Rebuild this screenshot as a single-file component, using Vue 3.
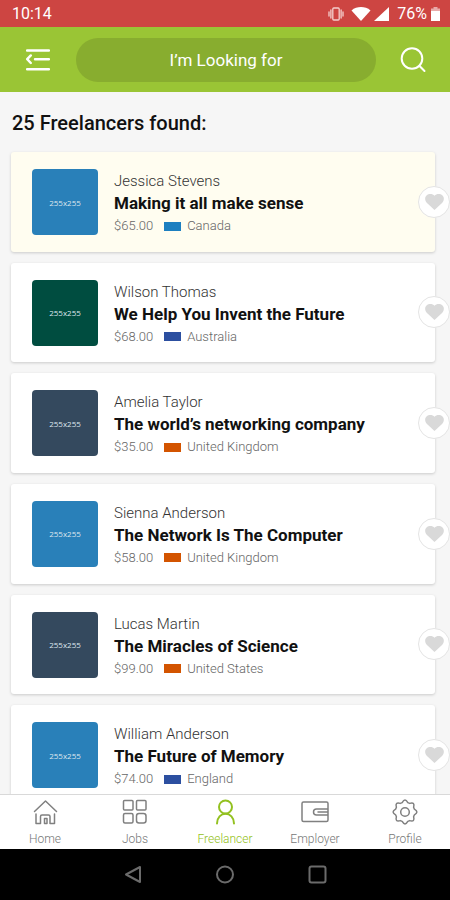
<script setup>
import { ref } from 'vue'

const query = ref('')

const freelancers = ref([
  { name: 'Jessica Stevens', title: 'Making it all make sense', rate: '$65.00', country: 'Canada', avatar: 'blue', flag: 'sky', featured: true, saved: false },
  { name: 'Wilson Thomas', title: 'We Help You Invent the Future', rate: '$68.00', country: 'Australia', avatar: 'green', flag: 'navy', saved: false },
  { name: 'Amelia Taylor', title: 'The world’s networking company', rate: '$35.00', country: 'United Kingdom', avatar: 'slate', flag: 'orange', saved: false },
  { name: 'Sienna Anderson', title: 'The Network Is The Computer', rate: '$58.00', country: 'United Kingdom', avatar: 'blue', flag: 'orange', saved: false },
  { name: 'Lucas Martin', title: 'The Miracles of Science', rate: '$99.00', country: 'United States', avatar: 'slate', flag: 'orange', saved: false },
  { name: 'William Anderson', title: 'The Future of Memory', rate: '$74.00', country: 'England', avatar: 'blue', flag: 'navy', saved: false },
])
</script>

<template>
  <div class="screen">
    <div class="status">
      <span class="clock">10:14</span>
      <svg class="vibrate" viewBox="0 0 16 16" width="16" height="16" aria-hidden="true">
        <rect x="4.8" y="2" width="6.4" height="12" rx="1" />
        <path d="M2.900 4v8M1 6v4M13.100 4v8M15 6v4" />
      </svg>
      <svg class="wifi" viewBox="0 0 20 14" width="20" height="14" aria-hidden="true">
        <path d="M0.500 3.400C6-1 14-1 19.500 3.400L10 14z" />
      </svg>
      <svg class="signal" viewBox="0 0 15 14" width="15" height="14" aria-hidden="true">
        <path d="M15 0v14H0z" />
      </svg>
      <span class="percent">76%</span>
      <svg class="battery" viewBox="0 0 9 14" width="9" height="14" aria-hidden="true">
        <path d="M2.500 0h4v1.500H9V14H0V1.500h2.500z" opacity=".55" />
        <path d="M0 4h9v10H0z" />
      </svg>
    </div>

    <header class="topbar">
      <button class="icon-button" type="button" aria-label="Menu">
        <svg viewBox="0 0 24 24" width="24" height="24" class="menu-icon">
          <path d="M1 2.500h22M9 11.200h14M1 21.200h22" />
          <path d="M4.800 7.400 1.200 11.200l3.600 3.800" />
        </svg>
      </button>
      <input v-model="query" class="search" type="text" placeholder="I’m Looking for" aria-label="Search freelancers" />
      <button class="icon-button" type="button" aria-label="Search">
        <svg viewBox="0 0 26 26" width="26" height="26" class="search-icon">
          <circle cx="12" cy="11.500" r="10.300" />
          <path d="M19.300 18.800l5.200 5.200" />
        </svg>
      </button>
    </header>

    <main class="content">
      <h1 class="heading">25 Freelancers found:</h1>
      <ul class="list">
        <li v-for="person in freelancers" :key="person.name" class="card" :class="{ featured: person.featured }">
          <span class="avatar" :class="person.avatar">255x255</span>
          <div class="details">
            <p class="name">{{ person.name }}</p>
            <h2 class="title">{{ person.title }}</h2>
            <p class="meta">
              <span>{{ person.rate }}</span>
              <i class="flag" :class="person.flag"></i>
              <span>{{ person.country }}</span>
            </p>
          </div>
          <button
            class="save"
            type="button"
            :class="{ saved: person.saved }"
            :aria-pressed="person.saved"
            :aria-label="'Save ' + person.name"
            @click="person.saved = !person.saved"
          >
            <svg viewBox="0 0 20 17" width="19" height="16">
              <path d="M10 17 2 9.500C-.5 7-.5 3.500 1.500 1.600 4-.7 8-.4 10 1.800 12-.4 16-.7 18.500 1.600c2 1.900 2 5.400-.5 7.900z" />
            </svg>
          </button>
        </li>
      </ul>
    </main>

    <nav class="tabs">
      <a class="tab" href="#home">
        <svg viewBox="0 0 26 26" width="26" height="26">
          <path d="M2.500 12.500 13.500 2l11 10.500M4 15V24.500h4.500V17.500q0-1.500 1.500-1.500h6.500q1.500 0 1.500 1.500v7h4.500V15M12.500 24.500V19.500h2.500v5z" />
        </svg>
        <span>Home</span>
      </a>
      <a class="tab" href="#jobs">
        <svg viewBox="0 0 26 26" width="26" height="26">
          <rect x="1.500" y="1.500" width="9.500" height="9.500" rx="1" />
          <rect x="14.500" y="1.500" width="9.500" height="9.500" rx="1" />
          <rect x="1.500" y="14.500" width="9.500" height="9.500" rx="1.500" />
          <rect x="14.500" y="14.500" width="9.500" height="9.500" rx="2.500" />
        </svg>
        <span>Jobs</span>
      </a>
      <a class="tab active" href="#freelancer" aria-current="page">
        <svg viewBox="0 0 26 26" width="26" height="26">
          <circle cx="13.500" cy="8" r="6.500" />
          <path d="M5 24.500c0-6 4-9.800 8.500-9.800s8.500 3.800 8.500 9.800" />
        </svg>
        <span>Freelancer</span>
      </a>
      <a class="tab" href="#employer">
        <svg viewBox="0 0 28 26" width="28" height="26">
          <path d="M27 10V4.500Q27 3 25.500 3h-23Q1 3 1 4.500V21q0 1.500 1.500 1.500h23Q27 22.500 27 21v-5M27 10H15.500a3 3 0 0 0 0 6H27zM17 13h10" />
        </svg>
        <span>Employer</span>
      </a>
      <a class="tab" href="#profile">
        <svg viewBox="0 0 26 26" width="26" height="26">
          <circle cx="13" cy="13" r="4.300" />
          <path d="M10.200 3.600Q13-1.400 15.800 3.600L17.700 4.400Q23.200 2.800 21.600 8.300L22.400 10.200Q27.400 13 22.400 15.800L21.600 17.700Q23.200 23.200 17.700 21.600L15.800 22.400Q13 27.400 10.200 22.400L8.300 21.600Q2.800 23.200 4.400 17.700L3.600 15.800Q-1.400 13 3.600 10.200L4.400 8.300Q2.800 2.800 8.300 4.400Z" />
        </svg>
        <span>Profile</span>
      </a>
    </nav>

    <div class="system">
      <button type="button" aria-label="Back">
        <svg viewBox="0 0 20 20" width="20" height="20"><path d="M17 2v15L3 9.500z" /></svg>
      </button>
      <button type="button" aria-label="Home screen">
        <svg viewBox="0 0 20 20" width="20" height="20"><circle cx="10" cy="9.500" r="8" /></svg>
      </button>
      <button type="button" aria-label="Recent apps">
        <svg viewBox="0 0 20 20" width="20" height="20"><rect x="2.500" y="1.500" width="16" height="16" rx="2" /></svg>
      </button>
    </div>
  </div>
</template>

<style>
body {
  margin: 0;
}
</style>

<style scoped>
.screen {
  display: flex;
  flex-direction: column;
  height: 100vh;
  overflow: hidden;
  background: #f6f6f6;
  color: #111;
  font-family: Roboto, "Liberation Sans", sans-serif;
}

button {
  display: flex;
  align-items: center;
  justify-content: center;
  padding: 0;
  border: 0;
  background: none;
  cursor: pointer;
}

svg {
  display: block;
  fill: none;
  stroke-linecap: round;
  stroke-linejoin: round;
}

.status {
  display: flex;
  flex: none;
  align-items: center;
  height: 27px;
  padding: 0 10px 0 12px;
  background: #cd4542;
  color: #fff;
  font-size: 16px;
}

.clock {
  flex: 1;
}

.vibrate {
  margin-right: 7px;
  stroke: #f4cfce;
  stroke-width: 1.3;
}

.wifi,
.signal,
.battery {
  fill: #fff;
}

.wifi {
  margin-right: 3px;
}

.signal {
  margin-right: 8px;
}

.percent {
  margin-right: 4px;
}

.topbar {
  display: flex;
  flex: none;
  align-items: center;
  height: 65px;
  background: #9ac535;
}

.icon-button {
  flex: none;
  width: 76px;
  height: 48px;
}

.icon-button:last-child {
  width: 74px;
}

.menu-icon {
  stroke: #fff;
  stroke-width: 2.4;
}

.search-icon {
  stroke: #fff;
  stroke-width: 2;
}

.search {
  flex: 1;
  box-sizing: border-box;
  min-width: 0;
  height: 44px;
  padding: 0 20px;
  border: 0;
  border-radius: 22px;
  outline: none;
  background: #88ad2f;
  color: #fff;
  font-family: inherit;
  font-size: 17px;
  text-align: center;
}

.search::placeholder {
  color: #fff;
  opacity: 1;
}

.content {
  display: flex;
  flex: 1;
  flex-direction: column;
  min-height: 0;
  overflow-y: auto;
  scrollbar-width: none;
}

.heading {
  flex: none;
  margin: 0;
  padding: 19px 12px 17px;
  font-size: 20px;
  font-weight: 500;
  line-height: 24px;
}

.list {
  display: grid;
  flex: 1 0 auto;
  grid-auto-rows: minmax(99px, 1fr);
  gap: 11px;
  margin: 0 15px -11px 11px;
  padding: 0;
  list-style: none;
}

.card {
  position: relative;
  display: flex;
  box-sizing: border-box;
  gap: 16px;
  padding: 17px 21px 14px;
  border-radius: 3px;
  background: #fff;
  box-shadow: 0 1px 3px rgba(0, 0, 0, 0.18);
}

.card.featured {
  background: #fffdf0;
}

.avatar {
  display: flex;
  flex: none;
  align-items: center;
  justify-content: center;
  width: 66px;
  height: 66px;
  border-radius: 4px;
  color: #dde6ee;
  font-family: "Open Sans", sans-serif;
  font-size: 8px;
}

.avatar.blue {
  background: #2980b9;
}

.avatar.green {
  background: #004d40;
}

.avatar.slate {
  background: #34495e;
}

.details {
  min-width: 0;
}

.name,
.title,
.meta {
  margin: 0;
  white-space: nowrap;
}

.name {
  margin-top: 2px;
  color: #333;
  font-size: 15px;
  font-weight: 300;
  line-height: 20px;
}

.title {
  color: #111;
  font-size: 17px;
  font-weight: 700;
  line-height: 24px;
}

.meta {
  display: flex;
  align-items: center;
  color: #666;
  font-size: 13px;
  font-weight: 300;
  line-height: 22px;
}

.flag {
  width: 17px;
  height: 9px;
  margin: 0 6px 0 11px;
}

.flag.sky {
  background: #1d7fc0;
}

.flag.navy {
  background: #2c4fa0;
}

.flag.orange {
  background: #d35400;
}

.save {
  position: absolute;
  top: 50%;
  right: -15px;
  width: 32px;
  height: 32px;
  border: 1px solid #e4e4e4;
  border-radius: 50%;
  background: #fff;
  transform: translateY(-50%);
}

.save svg {
  fill: #d9d9d9;
}

.save.saved svg {
  fill: #e0504d;
}

.tabs {
  position: relative;
  display: flex;
  flex: none;
  box-sizing: border-box;
  height: 55px;
  border-top: 1px solid #d9d9d9;
  background: #fff;
}

.tab {
  display: flex;
  flex: 1 0 0;
  flex-direction: column;
  align-items: center;
  gap: 6px;
  padding-top: 4px;
  color: #777;
  font-size: 12px;
  font-weight: 300;
  line-height: 16px;
  text-decoration: none;
}

.tab svg {
  stroke: #808080;
  stroke-width: 1.5;
}

.tab.active {
  color: #93c120;
}

.tab.active svg {
  stroke: #93c120;
  stroke-width: 2;
}

.system {
  display: flex;
  flex: none;
  align-items: center;
  justify-content: center;
  gap: 72px;
  height: 51px;
  background: #000;
}

.system svg {
  stroke: #6b6b6b;
  stroke-width: 2;
}
</style>
